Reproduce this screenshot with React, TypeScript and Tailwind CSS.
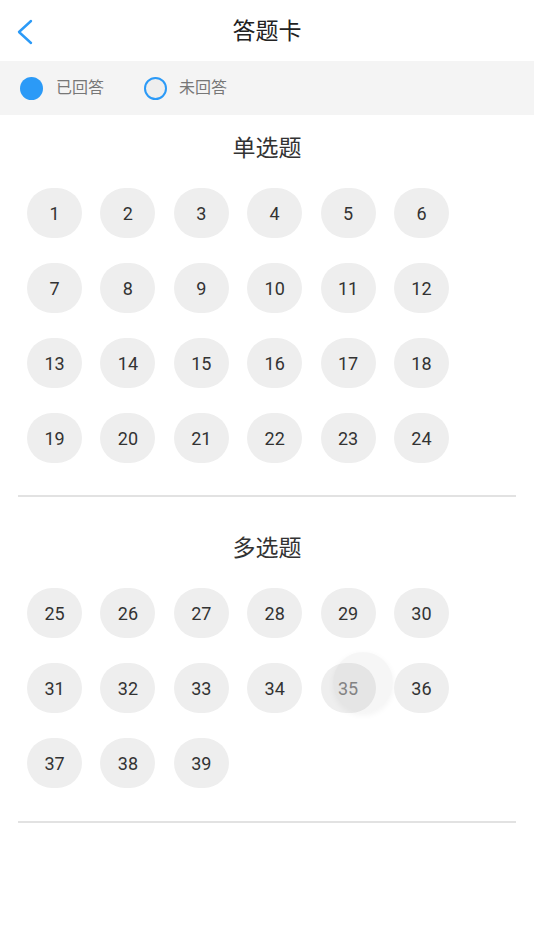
import React from 'react'

const single = Array.from({ length: 24 }, (_, i) => i + 1)
const multi = Array.from({ length: 15 }, (_, i) => i + 25)

function Bubble({ n }: { n: number }) {
  const pressed = n === 35
  return (
    <div className="relative flex h-[50px] w-[55px] items-center justify-center rounded-full bg-[#eeeeee]">
      <span className={pressed ? 'text-[18px] text-[#888888]' : 'text-[18px] text-[#333333]'}>{n}</span>
      {pressed && (
        <div className="pointer-events-none absolute left-[12px] top-[-11px] h-[61px] w-[60px] rounded-full bg-black/[0.035] shadow-[0_2px_6px_rgba(0,0,0,0.05)]" />
      )}
    </div>
  )
}

function Section({ title, items }: { title: string; items: number[] }) {
  return (
    <section>
      <h2 className="text-center text-[23px] leading-[30px] text-[#333333]">{title}</h2>
      <div className="mt-[24px] grid grid-cols-[repeat(6,55px)] gap-x-[18.4px] gap-y-[25px] pl-[27px]">
        {items.map((n) => (
          <Bubble key={n} n={n} />
        ))}
      </div>
    </section>
  )
}

export default function App() {
  return (
    <div
      className="min-h-[950px] w-[534px] bg-white"
      style={{ fontFamily: "Roboto, 'Noto Sans CJK SC', sans-serif" }}
    >
      {/* header */}
      <header className="relative flex h-[61px] items-center justify-center pt-[3px]">
        <svg className="absolute left-[16px] top-[18px]" width="20" height="28" viewBox="0 0 20 28" fill="none">
          <polyline points="15,3 3,14 15,25" stroke="#2b9af7" strokeWidth="2.4" strokeLinecap="round" strokeLinejoin="round" />
        </svg>
        <h1 className="text-[23px] text-[#222222]">答题卡</h1>
      </header>

      {/* legend */}
      <div className="flex h-[54px] items-center bg-[#f4f4f4] pl-[20px]">
        <span className="h-[23px] w-[23px] rounded-full bg-[#2b9af7]" />
        <span className="ml-[13px] text-[16px] text-[#777777]">已回答</span>
        <span className="ml-[40px] h-[23px] w-[23px] rounded-full border-2 border-[#2b9af7] bg-[#eeeeee]" />
        <span className="ml-[12px] text-[16px] text-[#777777]">未回答</span>
      </div>

      <div className="pt-[19px]">
        <Section title="单选题" items={single} />
      </div>
      <div className="mx-[18px] mt-[32px] h-[2px] bg-[#e2e2e2]" />
      <div className="pt-[37px]">
        <Section title="多选题" items={multi} />
      </div>
      <div className="mx-[18px] mt-[33px] h-[2px] bg-[#e2e2e2]" />
    </div>
  )
}
